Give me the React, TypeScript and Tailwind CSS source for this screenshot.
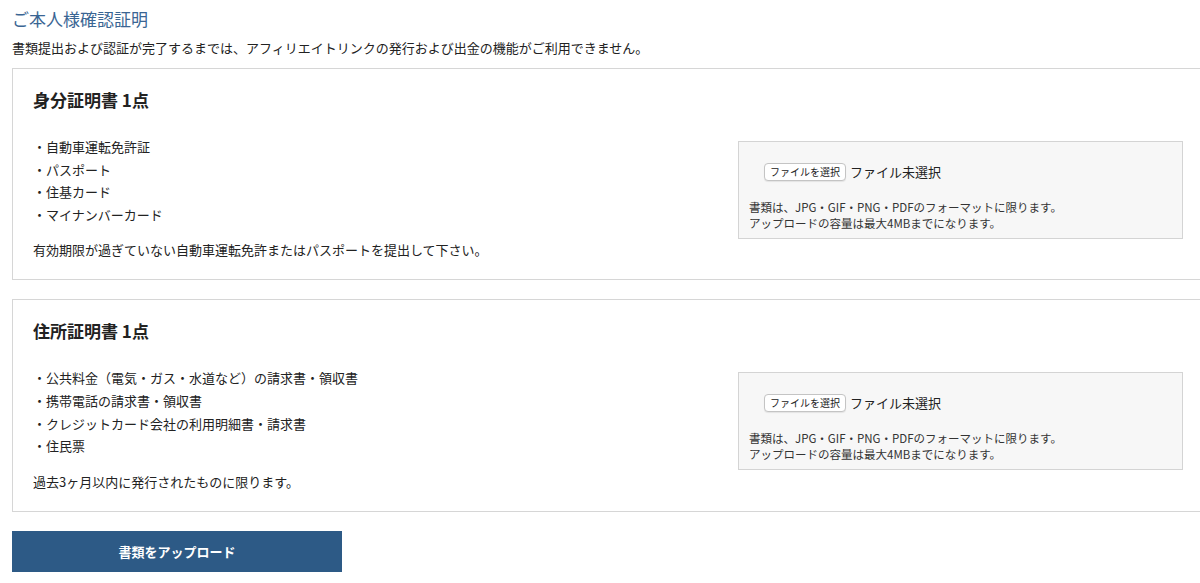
import React from 'react'

interface Section {
  title: string
  items: string[]
  note: string
}

const sections: Section[] = [
  {
    title: '身分証明書 1点',
    items: ['自動車運転免許証', 'パスポート', '住基カード', 'マイナンバーカード'],
    note: '有効期限が過ぎていない自動車運転免許またはパスポートを提出して下さい。',
  },
  {
    title: '住所証明書 1点',
    items: [
      '公共料金（電気・ガス・水道など）の請求書・領収書',
      '携帯電話の請求書・領収書',
      'クレジットカード会社の利用明細書・請求書',
      '住民票',
    ],
    note: '過去3ヶ月以内に発行されたものに限ります。',
  },
]

function UploadBox() {
  return (
    <div className="mt-[5px] mr-[28px] w-[445px] shrink-0 border border-[#d4d4d4] bg-[#f7f7f7] pl-[10px] pt-[20px] pb-[7px]">
      <div className="flex items-center pl-[15px]">
        <button className="h-[18px] w-[82px] rounded-[4px] border border-[#c4c4c4] bg-white text-[10px] leading-none text-[#222] shadow-[0_1px_1px_rgba(0,0,0,0.08)]">
          ファイルを選択
        </button>
        <span className="ml-[4px] text-[13px] text-[#222]">ファイル未選択</span>
      </div>
      <div className="mt-[17px] text-[11.5px] leading-[16px] text-[#333]">
        <p>書類は、JPG・GIF・PNG・PDFのフォーマットに限ります。</p>
        <p>アップロードの容量は最大4MBまでになります。</p>
      </div>
    </div>
  )
}

export default function App() {
  return (
    <div
      className="w-[1200px] h-[583px] overflow-hidden bg-white pl-[12px] pt-[7px] text-[#333]"
      style={{ fontFamily: '"Noto Sans CJK JP", "Noto Sans", sans-serif' }}
    >
      <h1 className="text-[17px] leading-[24px] text-[#3a6593]">ご本人様確認証明</h1>
      <p className="mt-[8px] text-[13px] leading-[18px] text-[#222]">
        書類提出および認証が完了するまでは、アフィリエイトリンクの発行および出金の機能がご利用できません。
      </p>

      <div className="mt-[11px] flex flex-col gap-[19px]">
        {sections.map((s) => (
          <div key={s.title} className="w-[1200px] border border-[#d6d6d6] bg-white pl-[20px] pt-[19px] pb-[18px]">
            <h2 className="text-[17px] font-bold leading-[24px] text-[#222]">{s.title}</h2>
            <div className="mt-[24px] flex items-start">
              <div className="flex-1">
                <ul className="text-[13px] leading-[22.6px] text-[#222]">
                  {s.items.map((item) => (
                    <li key={item}>・{item}</li>
                  ))}
                </ul>
                <p className="mt-[13px] text-[13px] leading-[22px] text-[#222]">{s.note}</p>
              </div>
              <UploadBox />
            </div>
          </div>
        ))}
      </div>

      <button className="mt-[19px] h-[41px] w-[330px] bg-[#2d5a86] text-[13px] font-bold text-white">
        書類をアップロード
      </button>
    </div>
  )
}
